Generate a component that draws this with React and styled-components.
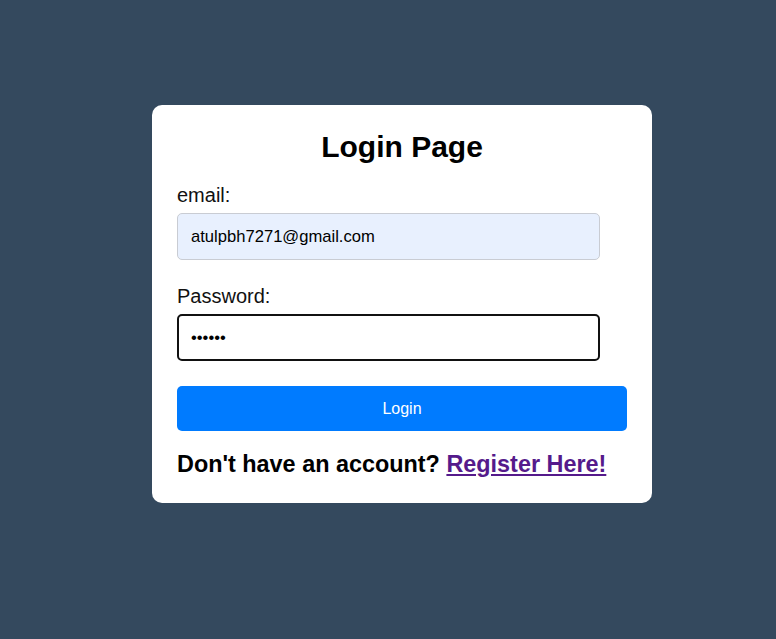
import React from "react";
import styled, { createGlobalStyle } from "styled-components";

const GlobalStyle = createGlobalStyle`
  html, body {
    margin: 0;
    padding: 0;
  }
  body {
    background: #34495e;
    font-family: "Liberation Sans", Arial, sans-serif;
    font-size: 20px;
  }
`;

const Page = styled.div`
  min-height: 100vh;
  box-sizing: border-box;
  display: flex;
  align-items: center;
  justify-content: center;
  padding: 0 0 31px 28px;
`;

const Card = styled.form`
  width: 500px;
  box-sizing: border-box;
  background: #fff;
  border-radius: 10px;
  padding: 25px 25px 25px;
`;

const Title = styled.h2`
  margin: 0 0 20px;
  font-size: 30px;
  text-align: center;
  color: #000;
`;

const Field = styled.div`
  margin-bottom: ${(p) => p.$gap || 25}px;
  & > label {
    display: block;
    margin-bottom: 6px;
    color: #111;
  }
`;

const Input = styled.input`
  display: block;
  width: 94%;
  height: 47px;
  box-sizing: border-box;
  font-family: "Liberation Sans", Arial, sans-serif;
  font-size: 16.6px;
  color: #000;
  border-radius: 5px;
  outline: none;
  background: ${(p) => (p.$filled ? "#e8f0fe" : "#fff")};
  border: ${(p) => (p.$focused ? "2px solid #111" : "1px solid #c9ccd3")};
  padding: 0 ${(p) => (p.$focused ? 12 : 13)}px;
`;

const Button = styled.button`
  display: block;
  width: 100%;
  height: 45px;
  border: none;
  border-radius: 5px;
  background: #007bff;
  color: #fff;
  font-family: "Liberation Sans", Arial, sans-serif;
  font-size: 16px;
  cursor: pointer;
`;

const Footer = styled.h3`
  margin: 20px 0 0;
  font-size: 23.4px;
  color: #000;
  & > a {
    color: #551a8b;
    text-decoration: underline;
  }
`;

export default function App() {
  return (
    <>
      <GlobalStyle />
      <Page>
        <Card onSubmit={(e) => e.preventDefault()}>
          <Title>Login Page</Title>
          <Field>
            <label htmlFor="email">email:</label>
            <Input id="email" type="email" $filled value="atulpbh7271@gmail.com" readOnly />
          </Field>
          <Field $gap={25}>
            <label htmlFor="password">Password:</label>
            <Input id="password" type="password" $focused value="123456" readOnly />
          </Field>
          <Button type="submit">Login</Button>
          <Footer>
            Don't have an account? <a href="#register">Register Here!</a>
          </Footer>
        </Card>
      </Page>
    </>
  );
}
